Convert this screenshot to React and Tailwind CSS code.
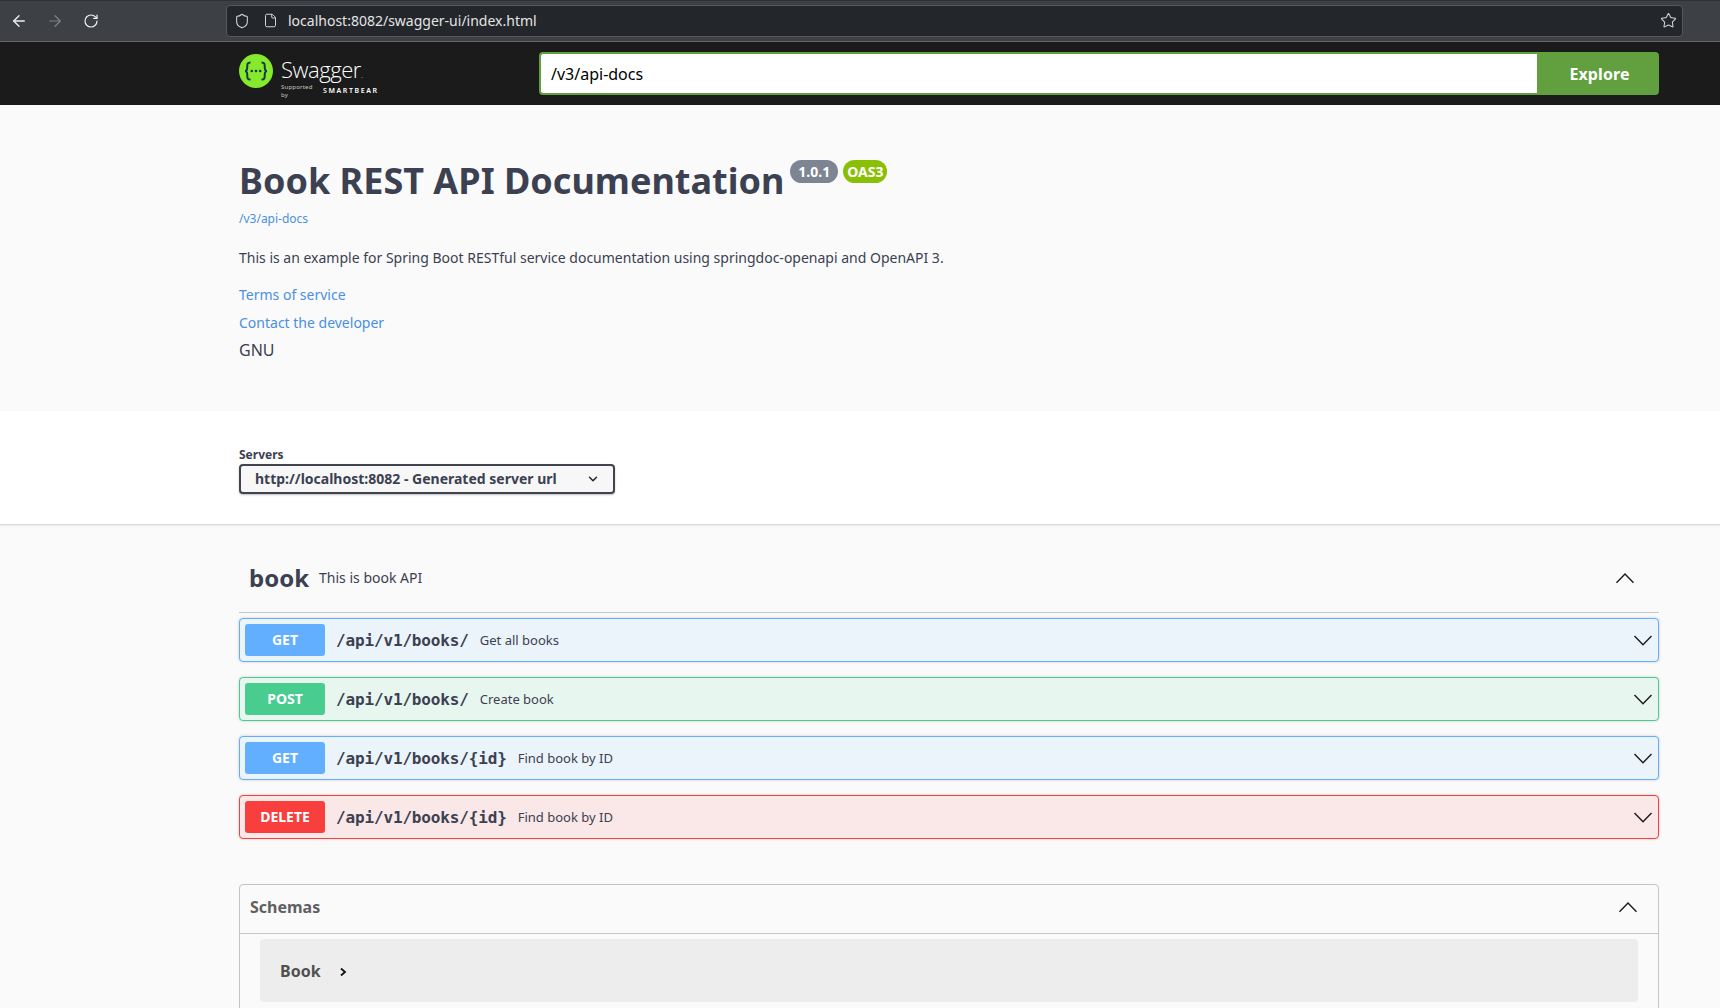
import { ArrowLeft, ArrowRight, RotateCw, Shield, File, Star, ChevronDown } from 'lucide-react';

const OPERATIONS = [
  { method: 'GET', path: '/api/v1/books/', summary: 'Get all books', row: 'bg-[#ebf3fb] border-[#61affe]', badge: 'bg-[#61affe]' },
  { method: 'POST', path: '/api/v1/books/', summary: 'Create book', row: 'bg-[#e8f6f0] border-[#49cc90]', badge: 'bg-[#49cc90]' },
  { method: 'GET', path: '/api/v1/books/{id}', summary: 'Find book by ID', row: 'bg-[#ebf3fb] border-[#61affe]', badge: 'bg-[#61affe]' },
  { method: 'DELETE', path: '/api/v1/books/{id}', summary: 'Find book by ID', row: 'bg-[#fae7e7] border-[#f93e3e]', badge: 'bg-[#f93e3e]' },
];

function Arrow({ up, className }) {
  return (
    <svg viewBox="0 0 20 20" className={className} fill="none" stroke="#1a1a1a" strokeWidth="1.4">
      <polyline points={up ? '1.5,14.8 10,6 18.5,14.8' : '1.5,6 10,14.8 18.5,6'} />
    </svg>
  );
}

function BrowserBar() {
  return (
    <div className="h-[42px] bg-[#3d4145] border-b border-[#62656a] border-t border-t-[#2e3135] flex items-center text-[#fbfbfe]">
      <ArrowLeft size={18} strokeWidth={1.8} className="ml-[10px] text-[#f0f0f2]" />
      <ArrowRight size={18} strokeWidth={1.6} className="ml-[18px] text-[#7f8286]" />
      <RotateCw size={16} strokeWidth={1.8} className="ml-[19px] text-[#f0f0f2]" />
      <div className="ml-[127px] w-[1457px] h-[32px] -mt-[1px] bg-[#23262a] border border-[#55585c] rounded-[4px] flex items-center">
        <Shield size={16} strokeWidth={1.6} className="ml-[7px] text-[#d4d4d6]" />
        <File size={15} strokeWidth={1.6} className="ml-[13px] text-[#d4d4d6]" />
        <span className="ml-[10px] text-[14px] text-[#e4e4e6]">localhost:8082/swagger-ui/index.html</span>
        <Star size={17} strokeWidth={1.5} className="ml-auto mr-[5px] text-[#d4d4d6]" />
      </div>
    </div>
  );
}

function Logo() {
  return (
    <div className="flex items-start w-[300px]">
      <svg viewBox="0 0 34 34" className="mt-[2px] w-[34px] h-[34px]">
        <circle cx="17" cy="17" r="17" fill="#85ea2d" />
        <g fill="none" stroke="#173647" strokeWidth="2">
          <path d="M11.5 8.5c-3.2 0-3.2 1.5-3.2 4 0 2.6-.6 4.5-2.3 4.5 1.7 0 2.3 1.900 2.300 4.500 0 2.500 0 4 3.200 4" />
          <path d="M22.500 8.500c3.200 0 3.200 1.500 3.200 4 0 2.600.6 4.500 2.300 4.500-1.700 0-2.300 1.900-2.300 4.500 0 2.500 0 4-3.200 4" />
        </g>
        <circle cx="12.800" cy="17" r="1.300" fill="#173647" />
        <circle cx="17" cy="17" r="1.300" fill="#173647" />
        <circle cx="21.200" cy="17" r="1.300" fill="#173647" />
      </svg>
      <div className="ml-[8px] mt-[4px] text-white">
        <div className="font-['Open_Sans',sans-serif] font-light text-[22px] leading-[26px] tracking-[-0.45px]">Swagger<span className="text-[8px]">.</span></div>
        <div className="flex items-center leading-[8px] h-[8px] -mt-[1px]">
          <span className="text-[6px] text-[#c8c8c8] tracking-[0.2px] w-[39px]">Supported by</span>
          <span className="ml-[3px] text-[7px] font-semibold tracking-[1.6px]">SMARTBEAR</span>
        </div>
      </div>
    </div>
  );
}

function Topbar() {
  return (
    <div className="h-[63px] bg-[#1b1b1b] pl-[239px] pt-[10px]">
      <div className="w-[1420px] flex items-start">
        <Logo />
        <div className="flex w-[1120px] h-[43px]">
          <div className="flex-1 bg-white border-2 border-[#62a03f] border-r-0 rounded-l-[4px] pl-[10px] flex items-center text-[16px] text-[#000]">/v3/api-docs</div>
          <div className="w-[122px] bg-[#62a03f] rounded-r-[4px] flex items-center justify-center pl-[3px] text-white text-[16px] font-bold tracking-[0.1px]">Explore</div>
        </div>
      </div>
    </div>
  );
}

function Info() {
  return (
    <div className="h-[306px] bg-[#fafafa] pl-[239px] pt-[51px] text-[#3b4151]">
      <div className="flex items-start">
        <h2 className="text-[36px] font-bold leading-[50px]">Book REST API Documentation</h2>
        <span className="ml-[6px] mt-[4px] h-[23px] px-[8px] rounded-[57px] bg-[#7d8492] text-white text-[14px] font-bold leading-[23px]">1.0.1</span>
        <span className="ml-[5px] mt-[4px] h-[23px] px-[4px] rounded-[57px] bg-[#89bf04] text-white text-[14px] font-bold leading-[23px]">OAS3</span>
      </div>
      <div className="mt-[4px] text-[12px] leading-[17px] text-[#4990e2]">/v3/api-docs</div>
      <p className="mt-[21px] text-[14px] leading-[20px]">This is an example for Spring Boot RESTful service documentation using springdoc-openapi and OpenAPI 3.</p>
      <div className="mt-[17px] text-[14px] leading-[20px] text-[#4990e2]">Terms of service</div>
      <div className="mt-[8px] text-[14px] leading-[20px] text-[#4990e2]">Contact the developer</div>
      <div className="mt-[6px] text-[16px] leading-[22px]">GNU</div>
    </div>
  );
}

function Servers() {
  return (
    <div className="h-[114px] bg-white border-b border-[#d9d9d9] shadow-[0_1px_2px_rgba(0,0,0,0.08)] pl-[239px] pt-[36px] relative text-[#3b4151]">
      <div className="text-[12px] font-bold leading-[16px]">Servers</div>
      <div className="mt-[1px] w-[376px] h-[30px] bg-[#f7f7f7] border-2 border-[#41444e] rounded-[4px] shadow-[0_1px_2px_rgba(0,0,0,0.25)] flex items-center pl-[14px] pb-[1px] text-[14px] font-bold">
        http://localhost:8082 - Generated server url
        <ChevronDown size={14} strokeWidth={2.5} className="ml-auto mr-[13px] text-[#222]" />
      </div>
    </div>
  );
}

function OperationRow({ op }) {
  return (
    <div className={`h-[44px] border rounded-[4px] shadow-[0_0_3px_rgba(0,0,0,0.19)] flex items-center pl-[5px] pr-[5px] ${op.row}`}>
      <div className={`w-[80px] h-[32px] rounded-[3px] flex items-center justify-center pb-[2px] text-white text-[14px] font-bold ${op.badge}`}>{op.method}</div>
      <span className="ml-[11px] pt-[2px] font-['DejaVu_Sans_Mono',monospace] font-bold text-[16px] tracking-[-0.15px] text-[#3b4151]">{op.path}</span>
      <span className="ml-[11px] pt-[2px] text-[13px] text-[#3b4151]">{op.summary}</span>
      <Arrow className="ml-auto w-[20px] h-[20px]" />
    </div>
  );
}

function Operations() {
  return (
    <div className="pt-[30px]">
      <div className="h-[58px] border-b border-[#c4c6cb] flex items-center pl-[10px] pb-[12px] text-[#3b4151]">
        <span className="text-[24px] font-bold">book</span>
        <span className="ml-[10px] text-[14px]">This is book API</span>
        <Arrow up className="ml-auto mr-[24px] w-[20px] h-[20px]" />
      </div>
      <div className="mt-[5px] flex flex-col gap-[15px]">
        {OPERATIONS.map((op, i) => (
          <OperationRow key={i} op={op} />
        ))}
      </div>
    </div>
  );
}

function Schemas() {
  return (
    <div className="mt-[45px] border border-[#c4c4c4] rounded-t-[4px] pb-[40px]">
      <div className="h-[49px] border-b border-[#c4c4c4] flex items-center pl-[10px] pb-[5px] text-[16px] font-bold text-[#606060]">
        Schemas
        <Arrow up className="ml-auto mr-[20px] w-[20px] h-[20px]" />
      </div>
      <div className="mx-[20px] mt-[5px] h-[63px] bg-[#ededed] rounded-[4px] flex items-center pl-[20px] text-[16px] font-bold text-[#505050]">
        Book
        <svg viewBox="0 0 10 10" className="ml-[17px] mt-[2px] w-[10px] h-[10px]" fill="none" stroke="#111" strokeWidth="1.800">
          <polyline points="3,1.500 7,5 3,8.500" />
        </svg>
      </div>
    </div>
  );
}

export default function App() {
  return (
    <div className="h-[1008px] overflow-hidden bg-[#fafafa] font-['Noto_Sans',sans-serif]">
      <BrowserBar />
      <Topbar />
      <Info />
      <Servers />
      <div className="ml-[239px] w-[1420px]">
        <Operations />
        <Schemas />
      </div>
    </div>
  );
}
